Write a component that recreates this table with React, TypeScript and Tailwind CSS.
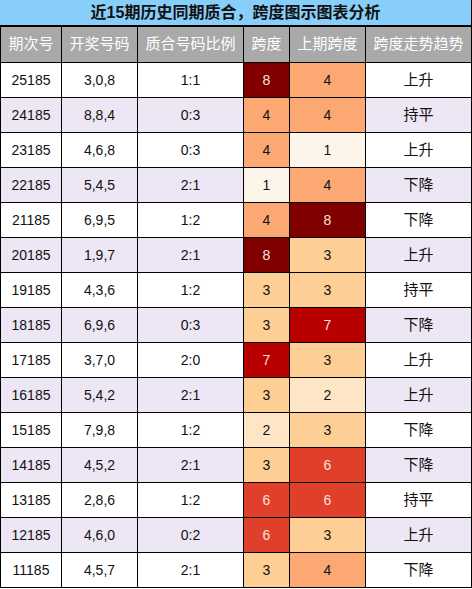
import React from "react";

const rows: [string, string, string, number, number, string][] = [
  ["25185", "3,0,8", "1:1", 8, 4, "上升"],
  ["24185", "8,8,4", "0:3", 4, 4, "持平"],
  ["23185", "4,6,8", "0:3", 4, 1, "上升"],
  ["22185", "5,4,5", "2:1", 1, 4, "下降"],
  ["21185", "6,9,5", "1:2", 4, 8, "下降"],
  ["20185", "1,9,7", "2:1", 8, 3, "上升"],
  ["19185", "4,3,6", "1:2", 3, 3, "持平"],
  ["18185", "6,9,6", "0:3", 3, 7, "下降"],
  ["17185", "3,7,0", "2:0", 7, 3, "上升"],
  ["16185", "5,4,2", "2:1", 3, 2, "上升"],
  ["15185", "7,9,8", "1:2", 2, 3, "下降"],
  ["14185", "4,5,2", "2:1", 3, 6, "下降"],
  ["13185", "2,8,6", "1:2", 6, 6, "持平"],
  ["12185", "4,6,0", "0:2", 6, 3, "上升"],
  ["11185", "4,5,7", "2:1", 3, 4, "下降"],
];

const heat: Record<number, string> = {
  1: "bg-[#fef5ea] text-[#111]",
  2: "bg-[#fee5c6] text-[#111]",
  3: "bg-[#fdcf95] text-[#111]",
  4: "bg-[#fca872] text-[#111]",
  6: "bg-[#e0402a] text-[#fde0dc]",
  7: "bg-[#b80000] text-[#fde0dc]",
  8: "bg-[#800000] text-[#fde0dc]",
};

const headers = ["期次号", "开奖号码", "质合号码比例", "跨度", "上期跨度", "跨度走势趋势"];

export default function App() {
  return (
    <div
      className="w-[472px] bg-white"
      style={{ fontFamily: '"Liberation Sans", "Noto Sans CJK SC", sans-serif' }}
    >
      <div className="h-[25px] bg-[#87cefa] border-r border-black flex items-center justify-center text-[16px] font-bold text-[#111]">
        近15期历史同期质合，跨度图示图表分析
      </div>
      <div className="h-[2px] bg-black" />
      <div className="grid grid-cols-[60px_75px_105px_45px_75px_105px] gap-px bg-black px-px pb-px">
        {headers.map((h) => (
          <div
            key={h}
            className="h-[35px] bg-[#a9a9a9] text-white text-[15px] flex items-center justify-center"
          >
            {h}
          </div>
        ))}
        {rows.map((r, i) => {
          const bg = i % 2 === 0 ? "bg-white" : "bg-[#ece6f5]";
          const base = "h-[34px] flex items-center justify-center text-[14px]";
          return (
            <React.Fragment key={r[0]}>
              <div className={`${base} ${bg} text-[#111]`}>{r[0]}</div>
              <div className={`${base} ${bg} text-[#111]`}>{r[1]}</div>
              <div className={`${base} ${bg} text-[#111]`}>{r[2]}</div>
              <div className={`${base} ${heat[r[3]]}`}>{r[3]}</div>
              <div className={`${base} ${heat[r[4]]}`}>{r[4]}</div>
              <div className={`${base} ${bg} text-[#111] text-[15px]`}>{r[5]}</div>
            </React.Fragment>
          );
        })}
      </div>
    </div>
  );
}
